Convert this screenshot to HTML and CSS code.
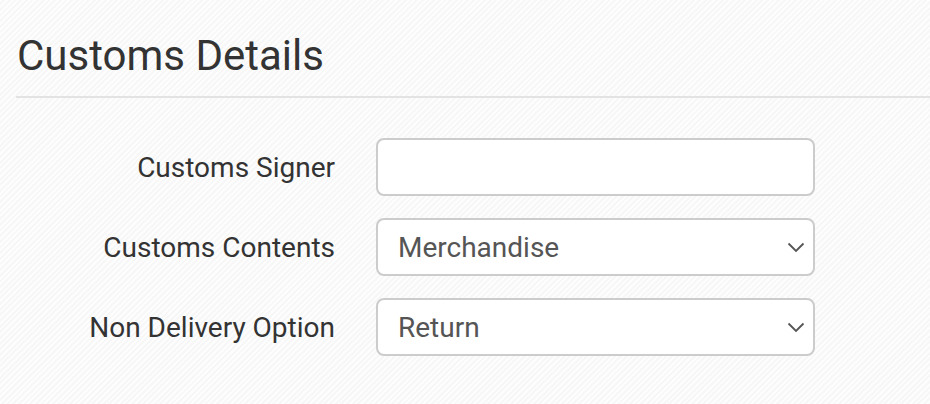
FILE: index.html
```html
<!DOCTYPE html>
<html>
<head>
<meta charset="utf-8">
<link rel="stylesheet" href="styles.css">
</head>
<body>
<div class="page">
  <h1 class="title">Customs Details</h1>
  <div class="rule"></div>
  <form class="form">
    <div class="row">
      <label class="label">Customs Signer</label>
      <div class="field"><input class="input" type="text"></div>
    </div>
    <div class="row">
      <label class="label">Customs Contents</label>
      <div class="field select">
        <span class="value">Merchandise</span>
        <svg class="chev" width="18" height="11" viewBox="0 0 18 11"><path d="M1.5 1.5 L9 9 L16.5 1.5" fill="none" stroke="#555" stroke-width="1.8"/></svg>
      </div>
    </div>
    <div class="row">
      <label class="label">Non Delivery Option</label>
      <div class="field select">
        <span class="value">Return</span>
        <svg class="chev" width="18" height="11" viewBox="0 0 18 11"><path d="M1.5 1.5 L9 9 L16.5 1.5" fill="none" stroke="#555" stroke-width="1.8"/></svg>
      </div>
    </div>
  </form>
</div>
</body>
</html>
```
FILE: styles.css
```css
html, body {
  margin: 0;
  padding: 0;
}
body {
  width: 930px;
  height: 404px;
  overflow: hidden;
  font-family: Roboto, "Liberation Sans", sans-serif;
  background-color: #fafafa;
  background-image: repeating-linear-gradient(135deg, #fdfdfd 0 2px, #f7f7f7 2px 4px);
}
.page {
  padding: 30px 0 0 16px;
}
.title {
  margin: 0 0 0 1px;
  font-size: 42px;
  font-weight: 400;
  color: #333;
  line-height: 52px;
}
.rule {
  margin-top: 14px;
  height: 2px;
  background: #e3e3e3;
}
.form {
  margin: 40px 0 0 0;
  display: flex;
  flex-direction: column;
  gap: 22px;
}
.row {
  display: flex;
  align-items: center;
  gap: 41px;
}
.label {
  width: 319px;
  text-align: right;
  font-size: 28px;
  color: #333;
}
.field {
  box-sizing: border-box;
  width: 439px;
  height: 58px;
  border: 2px solid #cccccc;
  border-radius: 8px;
  background: #fff;
}
.input {
  border: 0;
  outline: 0;
  background: transparent;
  width: 100%;
  height: 100%;
  padding: 0;
}
.select {
  display: flex;
  align-items: center;
  justify-content: space-between;
  padding: 0 8px 0 20px;
}
.value {
  font-size: 28px;
  color: #555;
}
.chev {
  display: block;
}
```
